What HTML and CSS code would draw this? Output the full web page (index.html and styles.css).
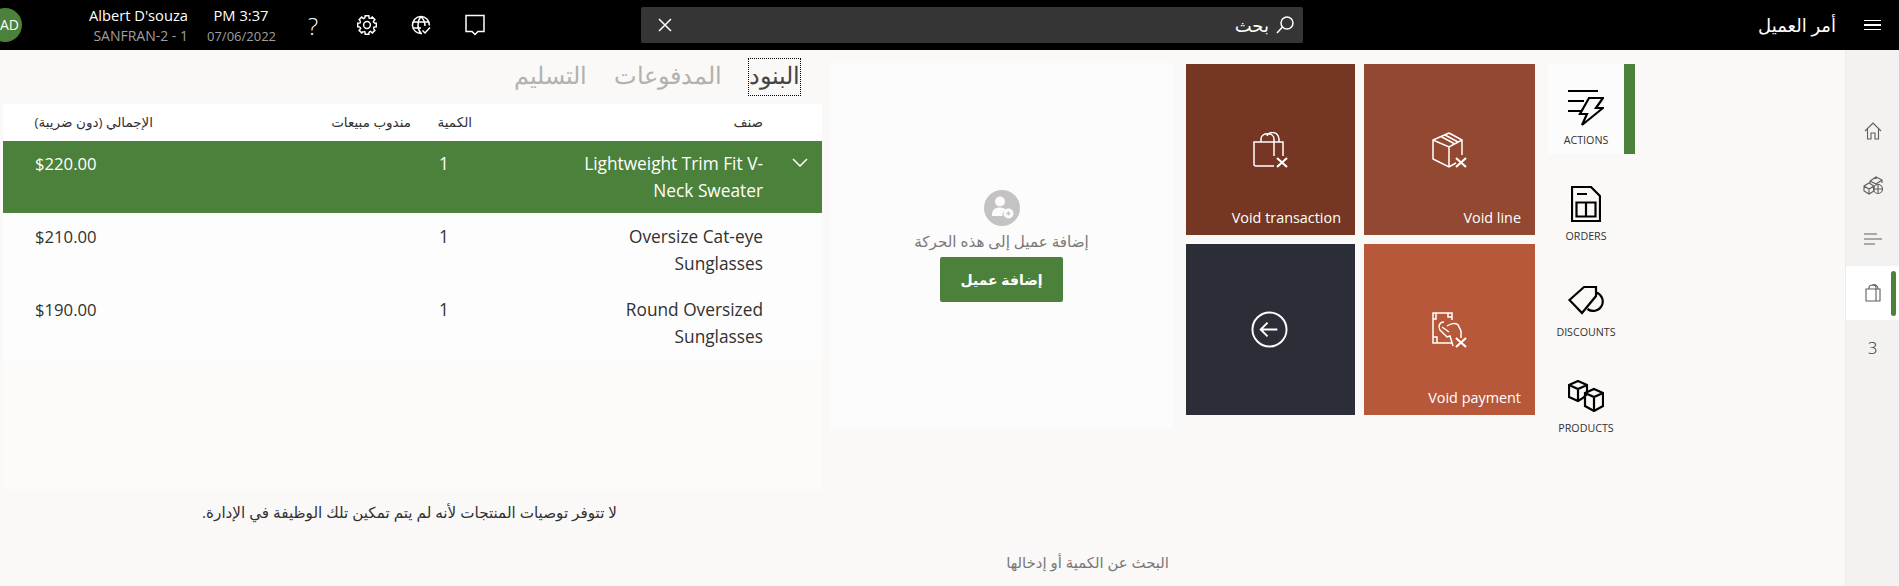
FILE: index.html
```html
<!DOCTYPE html>
<html lang="ar">
<head>
    <meta charset="UTF-8">
    <meta name="viewport" content="width=device-width, initial-scale=1.0">
    <title>أمر العميل</title>
    <link rel="stylesheet" href="styles.css">
</head>
<body>
    <header class="topbar">
        <div class="avatar">AD</div>
        <div class="user">
            <div class="user-name">Albert D'souza</div>
            <div class="user-sub">SANFRAN-2 - 1</div>
        </div>
        <div class="clock">
            <div class="clock-time">PM 3:37</div>
            <div class="clock-date">07/06/2022</div>
        </div>
        <div class="top-icon top-help">?</div>
        <div class="top-icon">
            <svg width="20" height="20" viewBox="-10 -10 20 20" class="line-white">
                <defs><path id="tooth" d="M6.89-2.1 9.33-1.81V1.81L6.89 2.1A7.2 7.2 0 0 1 6.36 3.38"/></defs>
                <use href="#tooth"/><use href="#tooth" transform="rotate(45)"/>
                <use href="#tooth" transform="rotate(90)"/><use href="#tooth" transform="rotate(135)"/>
                <use href="#tooth" transform="rotate(180)"/><use href="#tooth" transform="rotate(225)"/>
                <use href="#tooth" transform="rotate(270)"/><use href="#tooth" transform="rotate(315)"/>
                <circle r="3.4"/>
            </svg>
        </div>
        <div class="top-icon">
            <svg width="20" height="20" viewBox="0 0 20 20" class="line-white">
                <path d="M11 18.4A8.5 8.5 0 1 1 18.4 10.5M1.5 7H18M1.5 13H10M10 1.5C6 6 6 14 10 18.5M10 1.5C13 4.5 14 8 14 11"/>
                <path d="M11.5 15.5 14 18 19 12.5"/>
            </svg>
        </div>
        <div class="top-icon">
            <svg width="20" height="22" viewBox="0 0 20 22" class="line-white">
                <path d="M1 1.5H19V17.5H13L10 20.5 7 17.5H1Z"/>
            </svg>
        </div>
        <div class="search">
            <svg width="14" height="14" viewBox="0 0 14 14" class="line-white"><path d="M1 1 13 13M13 1 1 13"/></svg>
            <div class="search-label">
                <span dir="rtl">بحث</span>
                <svg width="18" height="18" viewBox="0 0 18 18" class="line-white">
                    <circle cx="11" cy="7" r="6"/><path d="M6.5 11 1 17"/>
                </svg>
            </div>
        </div>
        <div class="title" dir="rtl">أمر العميل</div>
        <div class="burger"><span></span><span></span><span></span></div>
    </header>

    <div class="main">
        <div class="content">
            <div class="upper">
                <section class="orders">
                    <nav class="order-tabs" dir="rtl">
                        <span class="order-tab active">البنود</span>
                        <span class="order-tab">المدفوعات</span>
                        <span class="order-tab">التسليم</span>
                    </nav>
                    <div class="lines">
                        <div class="line-row line-head">
                            <div dir="rtl">الإجمالي (دون ضريبة)</div>
                            <div class="cell-rep" dir="rtl">مندوب مبيعات</div>
                            <div class="cell-qty" dir="rtl">الكمية</div>
                            <div class="cell-item" dir="rtl">صنف</div>
                            <div></div>
                        </div>
                        <div class="line-row selected">
                            <div class="cell-total">$220.00</div>
                            <div class="cell-rep"></div>
                            <div class="cell-qty">1</div>
                            <div class="cell-item"><span>Lightweight Trim Fit V-Neck Sweater</span></div>
                            <div class="cell-chevron">
                                <svg width="16" height="9" viewBox="0 0 16 9" class="line-white"><path d="M1 1 8 8 15 1"/></svg>
                            </div>
                        </div>
                        <div class="line-row">
                            <div class="cell-total">$210.00</div>
                            <div class="cell-rep"></div>
                            <div class="cell-qty">1</div>
                            <div class="cell-item"><span>Oversize Cat-eye Sunglasses</span></div>
                            <div></div>
                        </div>
                        <div class="line-row">
                            <div class="cell-total">$190.00</div>
                            <div class="cell-rep"></div>
                            <div class="cell-qty">1</div>
                            <div class="cell-item"><span>Round Oversized Sunglasses</span></div>
                            <div></div>
                        </div>
                    </div>
                </section>

                <section class="customer">
                    <div class="customer-icon">
                        <svg width="36" height="36" viewBox="0 0 36 36">
                            <circle cx="18" cy="18" r="18" fill="#c4c3c2"/>
                            <circle cx="16" cy="11.5" r="5" fill="#fdfcfc"/>
                            <path d="M8 25C8 19 12 17.500 16 17.500 19 17.500 21 18.500 22 20 19 21 18 24 18.500 26H8Z" fill="#fdfcfc"/>
                            <circle cx="24.500" cy="23.500" r="5" fill="#fdfcfc"/>
                            <path d="M22.500 23.500H26.500M24.500 21.500V25.500" stroke="#c4c3c2" stroke-width="1.500"/>
                        </svg>
                    </div>
                    <div class="customer-text" dir="rtl">إضافة عميل إلى هذه الحركة</div>
                    <button class="customer-button" dir="rtl">إضافة عميل</button>
                </section>

                <section class="tiles">
                    <div class="tile tile-dark">
                        <svg width="36" height="36" viewBox="0 0 36 36" class="line-white">
                            <path d="M21 34H3Q1 34 1 32V10H21M21 10H30V24M8 10V7C8 0 21 0 21 7V24M14 4C16-1 25-1 26 7V10"/>
                            <path d="M24 26 34 35M34 26 24 35" stroke-width="2.200"/>
                        </svg>
                        <span class="tile-label">Void transaction</span>
                    </div>
                    <div class="tile tile-mid">
                        <svg width="36" height="36" viewBox="0 0 36 36" class="line-white">
                            <path d="M17 1 30 8V23M24 31 17 35 1 27V8L17 1M1 8 17 15 30 8M17 15V35M9 4.500 22 11.500M13 3 26 10"/>
                            <path d="M24 26 34 35M34 26 24 35" stroke-width="2.200"/>
                        </svg>
                        <span class="tile-label">Void line</span>
                    </div>
                    <div class="tile tile-back">
                        <svg width="37" height="37" viewBox="0 0 38 38" class="line-white line-back">
                            <circle cx="19" cy="19" r="17.500"/>
                            <path d="M10 19H27M17 12 10 19 17 26"/>
                        </svg>
                    </div>
                    <div class="tile tile-light">
                        <svg width="36" height="36" viewBox="0 0 36 36" class="line-white">
                            <path d="M20 31H1V1H20V8M1 7H4V1M16 1V5H20M1 25H5V31"/>
                            <path d="M12 10C7 10 6 15 8 18L15 25 18 24 21 34M15 14C18 12 24 10 26 13L29 19V26M10 15 17 20"/>
                            <path d="M24 26 34 35M34 26 24 35" stroke-width="2.200"/>
                        </svg>
                        <span class="tile-label">Void payment</span>
                    </div>
                </section>

                <nav class="side-tabs">
                    <div class="side-tab active">
                        <svg width="36" height="36" viewBox="0 0 36 36" class="line-black">
                            <path d="M0 1H30M0 11H16M0 21H13M21 8H35L28 18H35L14 35 19 24H12Z"/>
                        </svg>
                        <span>ACTIONS</span>
                    </div>
                    <div class="side-tab">
                        <svg width="30" height="36" viewBox="0 0 30 36" class="line-black">
                            <path d="M1 1H20L29 10V35H1ZM6 8H16M5.500 16.500H24.500V30.500H5.500ZM15 16.500V30.500"/>
                        </svg>
                        <span>ORDERS</span>
                    </div>
                    <div class="side-tab">
                        <svg width="36" height="30" viewBox="0 0 36 30" class="line-black">
                            <path d="M1.500 15 16 2H28V11L14 28ZM28.500 7.500A9.500 9.500 0 1 1 19.500 24"/>
                        </svg>
                        <span>DISCOUNTS</span>
                    </div>
                    <div class="side-tab">
                        <svg width="36" height="32" viewBox="0 0 36 32" class="line-black">
                            <path d="M10 1 19 5V14L15 18 10 21 1 17V5ZM1 5 10 9 19 5M10 9V21"/>
                            <path d="M26 9 35 13V26L26 31 17 26V13ZM17 13 26 17 35 13M26 17V31"/>
                        </svg>
                        <span>PRODUCTS</span>
                    </div>
                </nav>
            </div>

            <p class="no-recs" dir="rtl">لا تتوفر توصيات المنتجات لأنه لم يتم تمكين تلك الوظيفة في الإدارة.</p>
            <p class="qty-hint" dir="rtl">البحث عن الكمية أو إدخالها</p>
        </div>

        <aside class="rail">
            <div class="rail-item">
                <svg width="18" height="18" viewBox="0 0 18 18" class="line-gray">
                    <path d="M1 9 9 1 17 9M3.500 7V17H7V11H11V17H14.500V7"/>
                </svg>
            </div>
            <div class="rail-item">
                <svg width="20" height="20" viewBox="0 0 20 20" class="line-gray">
                    <path d="M7 6 13 2 19 5V8M7 6V8M7 6 13 9 19 5M13 2V4"/>
                    <path d="M1 11 6 8 11 11V16L6 19 1 16ZM1 11 6 14 11 11M6 14V19"/>
                    <circle cx="15" cy="14" r="4.500"/><path d="M15 10V18M11 14H19"/>
                </svg>
            </div>
            <div class="rail-item">
                <svg width="18" height="12" viewBox="0 0 18 12" class="line-gray">
                    <path d="M0 1H13M0 6H18M0 11H11"/>
                </svg>
            </div>
            <div class="rail-item active">
                <svg width="16" height="18" viewBox="0 0 16 18" class="line-gray">
                    <path d="M1 5H15V17H1ZM11 5V17M4 5V4C4 0 11 0 11 4V5M7 1.500C9-.5 13 1 13 5"/>
                </svg>
            </div>
            <div class="rail-item rail-count">3</div>
        </aside>
    </div>
</body>
</html>
```

FILE: styles.css
```css
body {
    font-family: "Open Sans", "DejaVu Sans", sans-serif;
    background-color: #faf9f8;
    color: #323130;
    margin: 0;
    height: 586px;
    overflow: hidden;
    display: flex;
    flex-direction: column;
}

svg {
    display: block;
    fill: none;
    stroke-width: 1.5;
}

.line-white {
    stroke: #fff;
}

.line-back {
    stroke-width: 2;
}

.line-black {
    stroke: #000;
    stroke-width: 2.2;
}

.line-gray {
    stroke: #605e5c;
    stroke-width: 1.1;
}

.topbar {
    height: 50px;
    flex: none;
    background-color: #000;
    color: #fff;
    display: flex;
    align-items: center;
    overflow: hidden;
}

.avatar {
    width: 34px;
    height: 34px;
    flex: none;
    margin-left: -12px;
    padding-right: 3px;
    box-sizing: border-box;
    border-radius: 50%;
    background-color: #4c813b;
    font-size: 14px;
    line-height: 34px;
    text-align: right;
}

.user {
    width: 100px;
    margin-left: 66px;
    text-align: right;
}

.user-name,
.clock-time {
    font-size: 14.700px;
    line-height: 21px;
    white-space: nowrap;
}

.user-sub {
    font-size: 14px;
    line-height: 20px;
    color: #a19f9d;
    white-space: nowrap;
}

.clock-date {
    font-size: 13px;
    line-height: 20px;
    color: #a19f9d;
    white-space: nowrap;
}

.clock {
    width: 68px;
    margin-left: 19px;
    text-align: center;
}

.top-icon {
    width: 54px;
    display: flex;
    justify-content: center;
}

.top-help {
    margin-left: 11px;
    font-size: 24px;
    font-weight: 300;
}

.search {
    width: 662px;
    height: 36px;
    margin-left: 139px;
    padding: 0 9px 0 17px;
    box-sizing: border-box;
    border-radius: 2px;
    background-color: #353535;
    font-size: 18px;
    display: flex;
    align-items: center;
    justify-content: space-between;
}

.search-label {
    display: flex;
    align-items: center;
    gap: 7px;
}

.title {
    margin-left: auto;
    font-size: 18px;
}

.burger {
    width: 17px;
    margin: 0 18px 0 28px;
    display: flex;
    flex-direction: column;
    gap: 3px;
}

.burger span {
    height: 1.5px;
    background-color: #fff;
}

.main {
    flex: 1;
    display: flex;
}

.content {
    flex: 1;
}

.upper {
    height: 440px;
    display: flex;
    align-items: flex-start;
}

.orders {
    width: 830px;
    height: 100%;
    flex: none;
    box-sizing: border-box;
    padding: 9px 8px 0 3px;
    display: flex;
    flex-direction: column;
}

.order-tabs {
    height: 36px;
    margin-right: 22px;
    display: flex;
    gap: 27px;
    font-size: 23.500px;
    line-height: 32px;
    color: #b3b1af;
    font-weight: 300;
}

.order-tab.active {
    color: #484644;
    outline: 1px dotted #000;
}

.lines {
    flex: 1;
    margin-top: 9px;
    background-color: #fcfbfa;
}

.line-row {
    height: 73px;
    padding-left: 32px;
    display: grid;
    grid-template-columns: 118px 258px 61px 291px 59px;
    font-size: 17.300px;
    line-height: 27px;
    padding-top: 10px;
    box-sizing: border-box;
    background-color: #fefdfd;
}

.line-head {
    height: 37px;
    padding-top: 0;
    background-color: #fff;
    font-size: 13.500px;
    line-height: 37px;
    white-space: nowrap;
}

.line-row.selected {
    height: 72px;
    padding-top: 9px;
    background-color: #4c813b;
    color: #fff;
}

.cell-total {
    font-size: 16.700px;
}

.cell-rep {
    text-align: right;
}

.cell-qty {
    padding-left: 28px;
}

.line-head .cell-qty {
    padding-left: 0;
    text-align: right;
}

.cell-item {
    text-align: right;
}

.cell-item span {
    display: inline-block;
    width: 200px;
}

.cell-chevron {
    display: flex;
    justify-content: center;
    padding: 8px 0 0 15px;
}

.customer {
    width: 343px;
    height: 366px;
    flex: none;
    margin-top: 13px;
    padding-top: 127px;
    box-sizing: border-box;
    background-color: #fdfcfc;
    display: flex;
    flex-direction: column;
    align-items: center;
}

.customer-text {
    margin-top: 5px;
    font-size: 15.200px;
    line-height: 20px;
    color: #7a7876;
}

.customer-button {
    width: 123px;
    height: 45px;
    margin-top: 6px;
    border: none;
    border-radius: 2px;
    background-color: #4c813b;
    color: #fff;
    font-family: inherit;
    font-size: 14px;
    font-weight: 700;
}

.tiles {
    margin: 14px 0 0 13px;
    display: grid;
    grid-template-columns: 169px 171px;
    grid-auto-rows: 171px;
    gap: 9px;
}

.tile {
    position: relative;
    display: flex;
    align-items: center;
    justify-content: center;
    color: #fff;
}

.tile-dark {
    background-color: #753723;
}

.tile-mid {
    background-color: #934831;
}

.tile-back {
    background-color: #2b2e36;
}

.tile-back svg {
    margin-right: 2px;
}

.tile-light {
    background-color: #b8583b;
}

.tile-label {
    position: absolute;
    right: 14px;
    bottom: 7px;
    font-size: 14.400px;
    line-height: 20px;
}

.side-tabs {
    margin: 14px 0 0 13px;
    display: flex;
    flex-direction: column;
    gap: 6px;
}

.side-tab {
    width: 76px;
    height: 90px;
    padding-right: 11px;
    position: relative;
    display: flex;
    flex-direction: column;
    align-items: center;
    color: #323130;
    font-size: 10.700px;
}

.side-tab svg {
    position: absolute;
    top: 44px;
    transform: translateY(-50%);
}

.side-tab span {
    margin-top: 68px;
    line-height: 16px;
}

.side-tab.active {
    background-color: #fdfcfc;
    border-right: 11px solid #4c813b;
    padding-right: 0;
}

.no-recs {
    margin: 12px 0 0;
    width: 617px;
    font-size: 15.200px;
    line-height: 20px;
}

.qty-hint {
    margin: 30px 0 0;
    width: 1169px;
    font-size: 14.900px;
    line-height: 20px;
    color: #797775;
}

.rail {
    width: 54px;
    flex: none;
    padding-top: 54px;
    box-sizing: border-box;
    background-color: #f3f2f1;
    border-left: 1px solid #edebe9;
}

.rail-item {
    height: 54px;
    display: flex;
    align-items: center;
    justify-content: center;
    position: relative;
}

.rail-item.active {
    background-color: #fff;
}

.rail-item.active::after {
    content: "";
    position: absolute;
    left: 45px;
    top: 5px;
    width: 5px;
    height: 45px;
    border-radius: 3px;
    background-color: #4c813b;
}

.rail-count {
    font-size: 17px;
    font-weight: 300;
}
```
